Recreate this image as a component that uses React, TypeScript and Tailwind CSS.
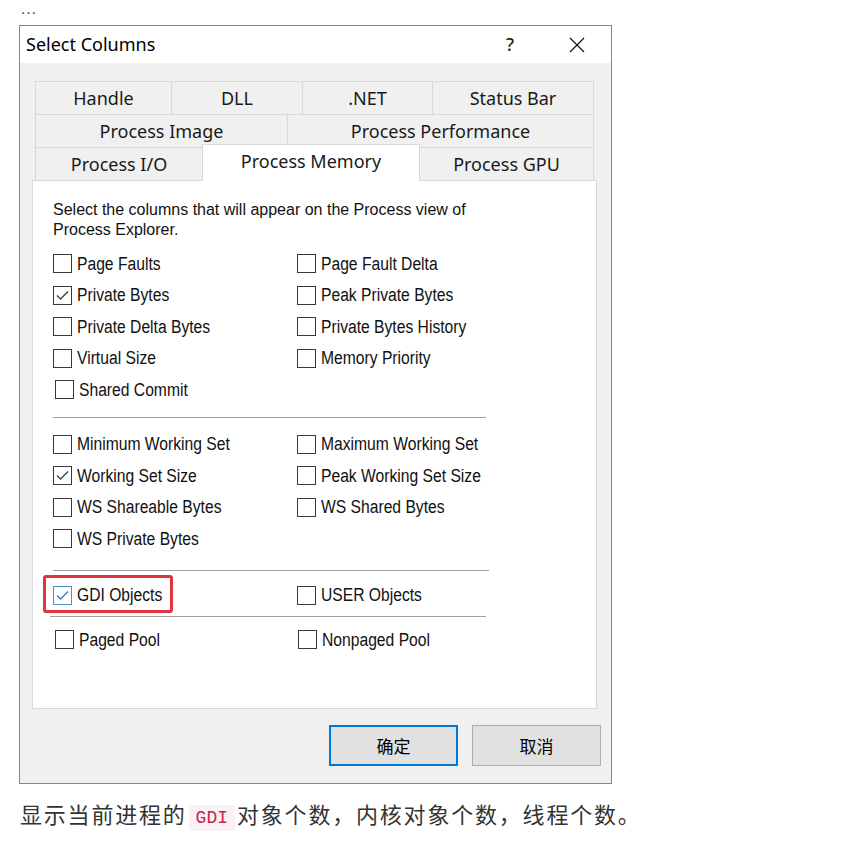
import React from "react";

type Item = { label: string; checked?: boolean; focus?: boolean; shift?: number };

const group1: Item[] = [
  { label: "Page Faults" },
  { label: "Page Fault Delta" },
  { label: "Private Bytes", checked: true },
  { label: "Peak Private Bytes" },
  { label: "Private Delta Bytes" },
  { label: "Private Bytes History" },
  { label: "Virtual Size" },
  { label: "Memory Priority" },
  { label: "Shared Commit", shift: 2 },
];

const group2: Item[] = [
  { label: "Minimum Working Set" },
  { label: "Maximum Working Set" },
  { label: "Working Set Size", checked: true },
  { label: "Peak Working Set Size" },
  { label: "WS Shareable Bytes" },
  { label: "WS Shared Bytes" },
  { label: "WS Private Bytes" },
];

function Box({ checked, focus }: { checked?: boolean; focus?: boolean }) {
  return (
    <span
      className={
        "w-[19px] h-[19px] shrink-0 bg-white border-[1.5px] flex items-center justify-center " +
        (focus ? "border-[#4f8fd6]" : "border-[#383838]")
      }
    >
      {checked && (
        <svg width="15" height="15" viewBox="0 0 15 15">
          <polyline
            points="2,7.5 5.5,11 13,3.5"
            fill="none"
            stroke={focus ? "#2f7fd8" : "#444"}
            strokeWidth="1.4"
          />
        </svg>
      )}
    </span>
  );
}

function Check({ item }: { item: Item }) {
  return (
    <div className="h-[31.5px] flex items-center" style={item.shift ? { paddingLeft: item.shift } : undefined}>
      <Box checked={item.checked} focus={item.focus} />
      <span className="ml-[5px] inline-block whitespace-nowrap origin-left scale-x-[0.87] text-[18px] text-[#111] leading-none">
        {item.label}
      </span>
    </div>
  );
}

function Tab({ label, w, last }: { label: string; w: string; last?: boolean }) {
  return (
    <div
      className={
        "h-[33px] flex items-center justify-center border-t border-l border-[#d9d9d9] bg-[#f0f0f0] " +
        w +
        (last ? " border-r" : "")
      }
    >
      {label}
    </div>
  );
}

export default function App() {
  return (
    <div className="w-[864px] h-[841px] bg-white overflow-hidden font-['Liberation_Sans',sans-serif]">
      <div className="h-[25px] pl-[20px] pt-[2px] text-[#555] text-[17px] leading-[14px]">…</div>

      {/* dialog window */}
      <div className="ml-[19px] w-[593px] h-[759px] border border-[#858585] bg-[#f0f0f0] flex flex-col">
        <div className="h-[37px] bg-white flex items-center pl-[6px] pr-[26px] text-[18px] text-black font-['Noto_Sans',sans-serif]">
          <span className="flex-1">Select Columns</span>
          <span className="text-[#222] mr-[55px] font-medium text-[18px]">?</span>
          <svg width="16" height="16" viewBox="0 0 16 16">
            <path d="M1 1 L15 15 M15 1 L1 15" stroke="#111" strokeWidth="1.2" />
          </svg>
        </div>

        <div className="flex-1 pl-[12px] pr-[14px] pt-[18px] flex flex-col">
          {/* tabs */}
          <div className="px-[3px] text-[18px] text-[#1a1a1a] font-['Noto_Sans',sans-serif]">
            <div className="flex">
              <Tab label="Handle" w="w-[136px]" />
              <Tab label="DLL" w="w-[131px]" />
              <Tab label=".NET" w="w-[130px]" />
              <Tab label="Status Bar" w="flex-1" last />
            </div>
            <div className="flex">
              <Tab label="Process Image" w="w-[252px]" />
              <Tab label="Process Performance" w="flex-1" last />
            </div>
            <div className="flex items-start h-[33px] relative z-10">
              <Tab label="Process I/O" w="w-[167px]" />
              <div className="w-[218px] h-[37px] -mt-[3px] bg-white border-t border-l border-r border-[#d9d9d9] flex items-start justify-center pt-[3px]">
                Process Memory
              </div>
              <div className="h-[33px] flex-1 flex items-center justify-center border-t border-r border-[#d9d9d9] bg-[#f0f0f0]">
                Process GPU
              </div>
            </div>
          </div>

          {/* tab page */}
          <div className="h-[529px] bg-white border border-[#d9d9d9] pl-[20px] pt-[19px] relative">
            <p className="text-[16px] leading-[20px] text-[#111] w-[440px]">
              Select the columns that will appear on the Process view of Process Explorer.
            </p>

            <div className="mt-[8px] grid grid-cols-[244px_1fr]">
              {group1.map((it) => (
                <Check key={it.label} item={it} />
              ))}
            </div>
            <div className="mt-[11px] w-[433px] h-px bg-[#a0a0a0]" />

            <div className="mt-[11px] grid grid-cols-[244px_1fr]">
              {group2.map((it) => (
                <Check key={it.label} item={it} />
              ))}
            </div>
            <div className="mt-[15px] w-[436px] h-px bg-[#a0a0a0]" />

            <div className="mt-[9px] grid grid-cols-[244px_1fr]">
              <Check item={{ label: "GDI Objects", checked: true, focus: true }} />
              <Check item={{ label: "USER Objects" }} />
            </div>
            <div className="mt-[5px] -ml-[3px] w-[436px] h-px bg-[#a0a0a0]" />

            <div className="mt-[7px] grid grid-cols-[244px_1fr]">
              <Check item={{ label: "Paged Pool", shift: 2 }} />
              <Check item={{ label: "Nonpaged Pool", shift: 1 }} />
            </div>

            {/* red annotation */}
            <div className="absolute left-[10px] top-[394px] w-[130px] h-[38px] border-[3px] border-[#e0353b] rounded-[3px]" />
          </div>

          {/* buttons */}
          <div className="mt-[16px] flex justify-end gap-[14px] text-[17px] text-black font-['Noto_Sans_CJK_SC',sans-serif]">
            <button className="w-[129px] h-[41px] bg-[#e1e1e1] border-2 border-[#0078d7]">确定</button>
            <button className="w-[129px] h-[41px] bg-[#e1e1e1] border border-[#adadad] -mr-[4px]">取消</button>
          </div>
        </div>
      </div>

      {/* caption */}
      <p className="mt-[17px] pl-[20px] text-[22px] leading-[30px] text-[#333] font-['Liberation_Sans','Noto_Sans_CJK_SC',sans-serif] tracking-[1.8px]">
        显示当前进程的
        <code className="mx-[2px] px-[7px] py-[3px] rounded-[3px] bg-[#f9f2f4] text-[#c7254e] text-[18px] tracking-normal font-['Liberation_Mono',monospace]">
          GDI
        </code>
        对象个数，内核对象个数，线程个数。
      </p>
    </div>
  );
}
